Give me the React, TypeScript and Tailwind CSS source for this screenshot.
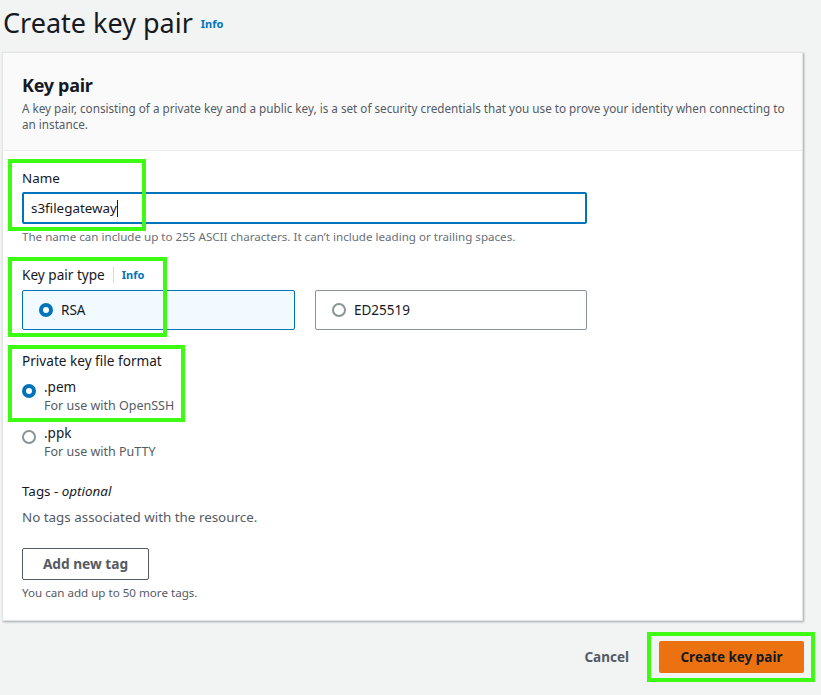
import React from "react";

const font = { fontFamily: '"Noto Sans", "Open Sans", Arial, sans-serif' };

function Radio({ checked }: { checked?: boolean }) {
  return checked ? (
    <span className="inline-block w-[14px] h-[14px] rounded-full border-[4px] border-[#0073bb] bg-white shrink-0" />
  ) : (
    <span className="inline-block w-[14px] h-[14px] rounded-full border-[2px] border-[#879596] bg-white shrink-0" />
  );
}

function Highlight({ className }: { className: string }) {
  return <div className={`absolute border-[4px] border-[#3dfb12] pointer-events-none ${className}`} />;
}

export default function App() {
  return (
    <div className="relative w-[821px] h-[695px] bg-[#f2f3f3] overflow-hidden text-[#16191f]" style={font}>
      <div className="flex items-end pl-[3px] h-[40px]">
        <h1 className="text-[27px] leading-[34px] font-normal mt-[-8px]">Create key pair</h1>
        <a className="ml-[8px] mb-[8px] text-[11px] font-bold text-[#0073bb]">Info</a>
      </div>

      <div className="mt-[12px] ml-[2px] w-[801px] h-[569px] bg-white border border-[#e1e4e4] shadow-[1px_1px_2px_rgba(0,28,36,0.35)]">
        <div className="bg-[#fafafa] border-b border-[#eaeded] h-[98px] pl-[19px] pr-[10px] pt-[20px]">
          <h2 className="text-[18px] leading-[24px] font-bold tracking-[-0.3px]">Key pair</h2>
          <p className="mt-[3px] text-[11.7px] leading-[16px] text-[#545b64]">
            <span className="whitespace-nowrap">
              A key pair, consisting of a private key and a public key, is a set of security credentials that you use to prove your identity when connecting to
            </span>
            <br />
            an instance.
          </p>
        </div>

        <div className="px-[19px] pt-[17px]">
          <label className="block text-[13.4px] leading-[20px]">Name</label>
          <div className="mt-[4px] w-[565px] h-[32px] border-2 border-[#0073bb] rounded-[2px] flex items-center px-[7px] text-[13.4px]">
            <span>s3filegateway</span>
            <span className="inline-block w-[1px] h-[17px] bg-[#16191f]" />
          </div>
          <p className="mt-[5px] text-[11.6px] leading-[16px] text-[#687078]">
            The name can include up to 255 ASCII characters. It can’t include leading or trailing spaces.
          </p>

          <div className="mt-[20px] flex items-center text-[13.6px] leading-[20px]">
            <span>Key pair type</span>
            <span className="mx-[8px] w-[1px] h-[16px] bg-[#d5dbdb]" />
            <span className="text-[11px] font-bold text-[#0073bb]">Info</span>
          </div>
          <div className="mt-[5px] flex gap-[20px]">
            <div className="w-[273px] h-[40px] rounded-[2px] border border-[#0073bb] bg-[#f1faff] flex items-center px-[16px] gap-[8px]">
              <Radio checked />
              <span className="text-[13.5px]">RSA</span>
            </div>
            <div className="w-[272px] h-[40px] rounded-[2px] border border-[#879596] bg-white flex items-center px-[16px] gap-[8px]">
              <Radio />
              <span className="text-[13.5px]">ED25519</span>
            </div>
          </div>

          <label className="mt-[21px] block text-[13.6px] leading-[20px]">Private key file format</label>
          <div className="mt-[6px] flex items-start gap-[8px]">
            <span className="mt-[3px]"><Radio checked /></span>
            <div>
              <div className="text-[13.5px] leading-[20px]">.pem</div>
              <div className="text-[12.5px] leading-[18px] text-[#545b64]">For use with OpenSSH</div>
            </div>
          </div>
          <div className="mt-[8px] flex items-start gap-[8px]">
            <span className="mt-[3px]"><Radio /></span>
            <div>
              <div className="text-[13.5px] leading-[20px]">.ppk</div>
              <div className="text-[12.5px] leading-[18px] text-[#545b64]">For use with PuTTY</div>
            </div>
          </div>

          <div className="mt-[20px] text-[13.4px] leading-[20px]">
            Tags - <span className="italic">optional</span>
          </div>
          <p className="mt-[6px] text-[13.4px] leading-[20px] text-[#545b64]">No tags associated with the resource.</p>
          <button className="mt-[21px] w-[127px] h-[32px] border border-[#545b64] rounded-[2px] bg-white text-[13.7px] font-bold text-[#545b64]">
            Add new tag
          </button>
          <p className="mt-[5px] text-[11.6px] leading-[16px] text-[#545b64]">You can add up to 50 more tags.</p>
        </div>
      </div>

      <div className="mt-[20px] flex items-center justify-end pr-[17px] gap-[30px]">
        <button className="text-[13.5px] font-bold text-[#545b64]">Cancel</button>
        <button className="w-[145px] h-[32px] rounded-[2px] bg-[#ec7211] text-[13.5px] font-bold text-[#16191f]">
          Create key pair
        </button>
      </div>

      <Highlight className="left-[8px] top-[159px] w-[138px] h-[72px]" />
      <Highlight className="left-[8px] top-[257px] w-[159px] h-[80px]" />
      <Highlight className="left-[8px] top-[345px] w-[177px] h-[77px]" />
      <Highlight className="left-[647px] top-[632px] w-[168px] h-[50px]" />
    </div>
  );
}
